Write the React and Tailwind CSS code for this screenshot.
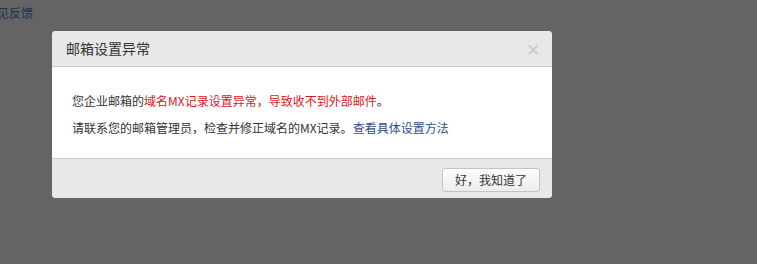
export default function App() {
  return (
    <div
      className="relative w-[757px] h-[264px] overflow-hidden bg-[#646464]"
      style={{ fontFamily: '"Noto Sans CJK SC", "Noto Sans", sans-serif' }}
    >
      <div className="absolute left-[-3px] top-[5px] text-[12px] leading-[16px] text-[#1d2f4d]">见反馈</div>

      <div className="absolute left-[52px] top-[31px] w-[500px] rounded-[4px] overflow-hidden bg-white">
        <div className="h-[36px] bg-[#e8e8e8] border-b border-[#cccccc] flex items-center justify-between pl-[14px] pr-[12px]">
          <span className="text-[14px] text-[#333333]">邮箱设置异常</span>
          <span className="text-[#c8c8c8] text-[17px] leading-none">✕</span>
        </div>
        <div className="h-[92px] border-b border-[#cccccc] px-[20px] pt-[20px] text-[12px] text-[#333333]">
          <p className="leading-[27px]">
            您企业邮箱的<span className="text-[#e0151b]">域名MX记录设置异常，导致收不到外部邮件</span>。
          </p>
          <p className="leading-[27px]">
            请联系您的邮箱管理员，检查并修正域名的MX记录。<span className="text-[#2d4f86]">查看具体设置方法</span>
          </p>
        </div>
        <div className="h-[39px] bg-[#e8e8e8] flex justify-end pt-[9px] pr-[12px]">
          <button className="h-[24px] w-[98px] rounded-[3px] border border-[#c4c4c4] bg-gradient-to-b from-[#fdfdfd] to-[#ededed] text-[12px] text-[#333333] leading-none">
            好，我知道了
          </button>
        </div>
      </div>
    </div>
  );
}
